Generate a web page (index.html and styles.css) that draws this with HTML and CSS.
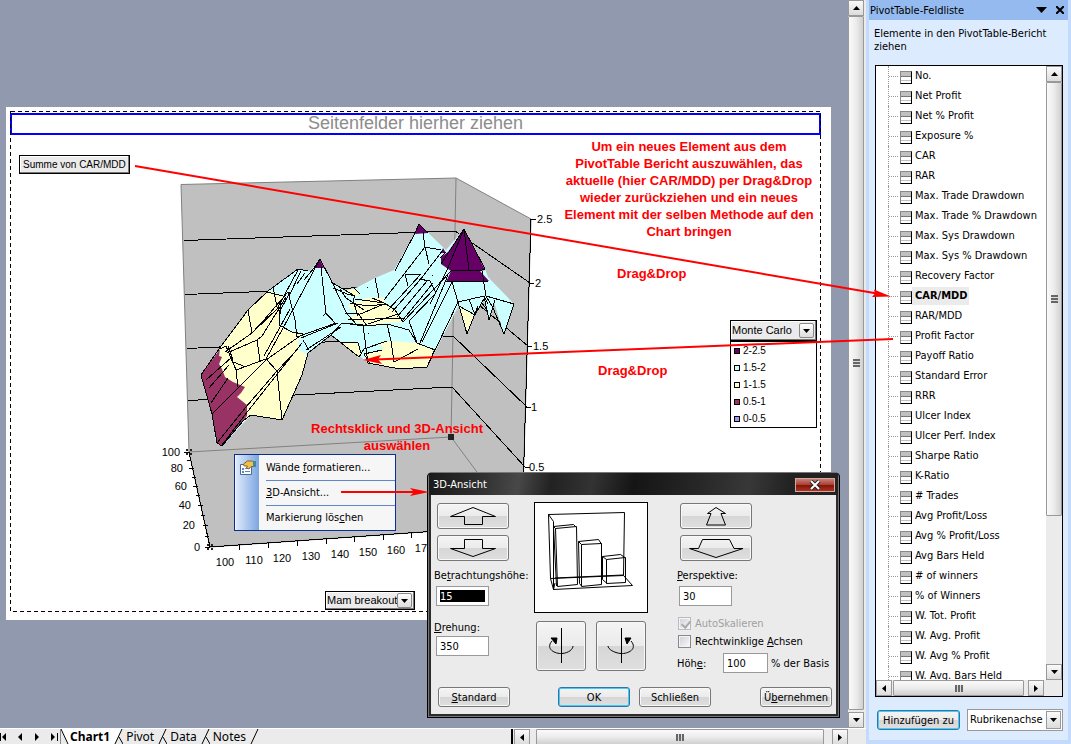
FILE: index.html
```html
<!DOCTYPE html>
<html lang="de">

<head>
    <meta charset="UTF-8">
    <meta name="viewport" content="width=device-width, initial-scale=1.0">
    <title>PivotChart</title>
    <link rel="stylesheet" href="styles.css">
</head>

<body>
    <main class="workspace">
        <div class="work-row">
            <div class="stage">
                <section class="sheet">
                    <div class="page-fields">Seitenfelder hierher ziehen</div>

                    <svg class="chart" viewBox="6 107 825 513" width="825" height="513">
                        <!-- print area -->
                        <path class="dashed" d="M10.5 111.5H820.5V611.5H10.5Z" />

                        <!-- walls and floor -->
                        <path fill="#c0c0c0" stroke="#808080" d="M181 184.500L456 178L531 219L522 525L210 547L189 452Z" />
                        <path class="wall" d="M456 178L451 437M189 452L451 437L517 526" />
                        <path class="line" d="M184 240.500L455 231L530 283M185 294.500L454 284L528 346M187 348.500L453 336L527 407M188 400.500L452 387L525 467" />
                        <path class="line" d="M531 219L522 525M189 452L210 547L522 525" />
                        <path class="line" d="M531 219h5M529 283h5M527 346h5M526 407h5M525 467h5" />
                        <path class="line" d="M184 452h5M187 460h4M189 468h5M192 477h4M193 486h5M196 495h4M198 505h5M201 515h4M203 525h5M205 536h4M205 547h5" />
                        <path class="line" d="M239 545v5M268 543v5M297 541v5M326 539v5M354 537v5M383 535v5M411 533v5" />

                        <!-- surface bands -->
                        <path fill="#ccffff" class="edge" d="M219 349L248 310L268 291L298 269L310 271L320 259L332 282L345 291L358 287L375 278L394 270L415 233L419 224L446 250L464 229L485 269L488 277L514 304L504 334L494 302L489 321L484 300L482 304L474 315L467 334L459 305L427 367L400 369L370 364L331 335L308 353L302 375L282 420L251 415L222 446L216 443L212 414L201 375Z" />
                        <path fill="#ffffcc" d="M219 349L248 310L268 291L283 296L280 313L279 325L292 332L303 334L298 340L299 350L307 355L302 375L282 420L251 415L245 421L222 380Z" />
                        <path fill="#ffffcc" d="M345 290L357 289L360 295L353 297ZM348 307L350 303L362 301L365 298L383 297L386 304L395 310L403 322L385 323L367 326L348 319L358 313ZM340 342L357 343L361 353L359 358ZM363 354L383 350L380 344L390 341L417 343L434 350L427 367L400 369L370 363ZM459 307L474 315L467 334Z" />
                        <path fill="#993366" d="M220 349L219 356L222 357L219 364L222 369L225 377L233 382L245 387L241 393L237 397L247 405L247 416L222 446L217 443L212 414L201 375Z" />
                        <path fill="#660066" d="M320 260L324 268H314ZM419 224L428 233L415 234ZM443 248L446 253H441ZM464 229L485 270L480 271L489 281L446 282L451 271L441 264L441 257L448 252Z" />

                        <!-- surface mesh -->
                        <g class="mesh">
                            <path d="M201 375L219 349L248 310L268 291L298 269L308 271M201 375L212 414L217 443L222 446L243 421L251 415L282 420L302 375L308 353L331 335" />
                            <path d="M248 310L252 333L225 352M252 333L279 307M220 349L226 346L236 370L238 387M227 353L257 340L260 361M257 340L262 336M228 346L233 360" />
                            <path d="M236 370L266 359L277 371L282 420M233 362L246 367M262 336L280 307L286 297M206 380L232 357M209 388L229 365" />
                            <path d="M212 414L266 360L300 336M217 443L246 407L277 371L298 349M222 445L248 411L302 343M211 403L228 378" />
                            <path d="M267 292L283 296M273 287L277 307L281 314M298 270L278 307M301 271L289 296M305 273L297 284M288 292L264 320L252 333M288 292L295 320L297 337M290 292L279 313" />
                            <path d="M320 259L288 319L266 359M321 267L326 314L335 323M320 259L332 282L347 314L358 326M323 316L326 313L335 323M279 325L292 332L303 334M281 300L279 325M314 268L304 280M297 337L336 323M303 340L309 350M264 356L290 309" />
                            <path d="M301 338L338 323M306 350L341 327M331 335L342 323L363 325" />
                            <path d="M331 282L355 296L353 300L358 316M333 288L347 294L355 296M340 289L346 298L364 310M355 299L384 303M353 287L360 294M345 314L358 313L367 326M348 320L403 318M350 303L368 306L387 304M358 315L384 304M368 324L398 314M372 298L382 302L386 304L395 310L403 322" />
                            <path d="M331 335L359 357L364 349L387 341M340 342L358 343L361 353M363 325L368 363L400 369L427 367L435 349M342 323L365 326L387 324L409 330L417 343M387 324L391 341L394 362L418 349M417 343L435 350M370 364L364 354L382 350" />
                            <path d="M375 278L379 298M395 271L415 233M423 232L425 247L384 300M425 247L429 264M405 274L421 274L388 310M405 274L408 286M425 247L441 250M443 250L420 280L392 312M419 279L430 281L436 293M427 281L397 317M433 283L402 321M436 293L409 321L417 343M451 271L403 322M448 275L420 343" />
                            <path d="M464 229L447 270L430 304M464 229L469 270L482 270L485 269M451 271L469 270M446 282L489 281M452 282L458 302L427 367M482 271L486 296L514 304M452 282L422 342M458 302L484 296L488 304M458 302L467 334L478 306M459 306L475 315M469 299L475 315L485 297M484 296L489 320L495 300M504 334L514 304M482 303L487 310M486 296L493 308L504 334" />
                            <path d="M464 229L441 264M464 229L485 269M419 224L415 233M419 224L428 233M320 259L314 268M440 258L446 252M367 287h1M432 275h1M368 333h1" />
                        </g>
                        <!-- selection handles -->
                        <g class="handle">
                            <path d="M186 449h2v2h-2zM190 449h2v2h-2zM186 453h2v2h-2zM190 453h2v2h-2zM207 544h2v2h-2zM211 544h2v2h-2zM207 548h2v2h-2zM211 548h2v2h-2zM448 434h6v6h-6z" />
                        </g>

                        <g class="axis axis-left">
                            <text x="180" y="456">100</text>
                            <text x="183" y="472">80</text>
                            <text x="187" y="490">60</text>
                            <text x="191" y="509">40</text>
                            <text x="195" y="529">20</text>
                            <text x="200" y="551">0</text>
                        </g>
                        <g class="axis axis-bottom">
                            <text x="225" y="566">100</text>
                            <text x="254" y="564">110</text>
                            <text x="282" y="562">120</text>
                            <text x="311" y="560">130</text>
                            <text x="340" y="558">140</text>
                            <text x="368" y="556">150</text>
                            <text x="396" y="554">160</text>
                            <text x="424" y="552">170</text>
                        </g>
                        <g class="axis">
                            <text x="537" y="223">2.5</text>
                            <text x="535" y="287">2</text>
                            <text x="533" y="350">1.5</text>
                            <text x="531" y="411">1</text>
                            <text x="529" y="471">0.5</text>
                        </g>
                    </svg>

                    <button class="field-button data-field">Summe von CAR/MDD</button>
                    <button class="field-button category-field">Mam breakout
                        <span class="drop"><svg width="7" height="4"><path d="M0 0h7L3.500 4z" /></svg></span>
                    </button>

                    <div class="legend">
                        <button class="field-button legend-field">Monte Carlo
                            <span class="drop"><svg width="7" height="4"><path d="M0 0h7L3.500 4z" /></svg></span>
                        </button>
                        <ul class="legend-items">
                            <li><i class="key key-5"></i>2-2.5</li>
                            <li><i class="key key-4"></i>1.5-2</li>
                            <li><i class="key key-3"></i>1-1.5</li>
                            <li><i class="key key-2"></i>0.5-1</li>
                            <li><i class="key key-1"></i>0-0.5</li>
                        </ul>
                    </div>

                    <p class="note note-main">Um ein neues Element aus dem<br>PivotTable Bericht auszuwählen, das<br>aktuelle (hier CAR/MDD) per Drag&amp;Drop<br>wieder zurückziehen und ein neues<br>Element mit der selben Methode auf den<br>Chart bringen</p>
                    <p class="note note-drag-1">Drag&amp;Drop</p>
                    <p class="note note-drag-2">Drag&amp;Drop</p>
                    <p class="note note-menu">Rechtsklick und 3D-Ansicht<br>auswählen</p>
                </section>
            </div>

            <div class="scrollbar vertical stage-scroll">
                <button class="scroll-button" aria-label="Nach oben"><svg width="7" height="4"><path d="M0 4h7L3.500 0z" /></svg></button>
                <div class="thumb"><i class="grip"></i></div>
                <button class="scroll-button" aria-label="Nach unten"><svg width="7" height="4"><path d="M0 0h7L3.500 4z" /></svg></button>
            </div>
        </div>

        <footer class="tab-bar">
            <div class="tab-nav">
                <button aria-label="Erstes Blatt"><svg width="7" height="8"><path d="M0 0h1v8H0zM6 0v8L2 4z" /></svg></button>
                <button aria-label="Vorheriges Blatt"><svg width="7" height="8"><path d="M5 0v8L1 4z" /></svg></button>
                <button aria-label="Nächstes Blatt"><svg width="7" height="8"><path d="M1 0v8l4-4z" /></svg></button>
                <button aria-label="Letztes Blatt"><svg width="7" height="8"><path d="M0 0v8l4-4zM6 0h1v8H6z" /></svg></button>
            </div>
            <div class="tabs">
                <svg class="slash" width="9" height="16"><path class="slash-fill" d="M0 0h9v16H7z" /><path d="M0 0L7 15" /></svg>
                <button class="tab active">Chart1</button>
                <svg class="slash" width="9" height="16"><path class="slash-fill" d="M0 0h8L0 16z" /><path d="M8 0L1 15M5 8l4 7" /></svg>
                <button class="tab">Pivot</button>
                <svg class="slash" width="9" height="16"><path d="M8 0L1 15M5 8l4 7" /></svg>
                <button class="tab">Data</button>
                <svg class="slash" width="9" height="16"><path d="M8 0L1 15M5 8l4 7" /></svg>
                <button class="tab">Notes</button>
                <svg class="slash" width="9" height="16"><path d="M8 0L1 15" /></svg>
            </div>
            <div class="scrollbar horizontal sheet-scroll">
                <button class="scroll-button" aria-label="Nach links"><svg width="4" height="7"><path d="M4 0v7L0 3.500z" /></svg></button>
                <div class="thumb"><i class="grip"></i></div>
                <button class="scroll-button" aria-label="Nach rechts"><svg width="4" height="7"><path d="M0 0v7l4-3.500z" /></svg></button>
            </div>
        </footer>
    </main>

    <aside class="pane">
        <header class="pane-title">
            <h2>PivotTable-Feldliste</h2>
            <button aria-label="Optionen"><svg width="11" height="6"><path d="M0 0h11L5.500 6z" /></svg></button>
            <button aria-label="Schließen"><svg width="8" height="8"><path fill="none" stroke="#000" stroke-width="2" d="M0 0l8 8M8 0L0 8" /></svg></button>
        </header>
        <div class="pane-body">
            <p class="pane-hint">Elemente in den PivotTable-Bericht ziehen</p>
            <div class="field-box">
                <div class="field-row">
                    <ul class="fields">
                        <li><i class="field-icon"></i><span>No.</span></li>
                        <li><i class="field-icon"></i><span>Net Profit</span></li>
                        <li><i class="field-icon"></i><span>Net % Profit</span></li>
                        <li><i class="field-icon"></i><span>Exposure %</span></li>
                        <li><i class="field-icon"></i><span>CAR</span></li>
                        <li><i class="field-icon"></i><span>RAR</span></li>
                        <li><i class="field-icon"></i><span>Max. Trade Drawdown</span></li>
                        <li><i class="field-icon"></i><span>Max. Trade % Drawdown</span></li>
                        <li><i class="field-icon"></i><span>Max. Sys Drawdown</span></li>
                        <li><i class="field-icon"></i><span>Max. Sys % Drawdown</span></li>
                        <li><i class="field-icon"></i><span>Recovery Factor</span></li>
                        <li class="used"><i class="field-icon"></i><span>CAR/MDD</span></li>
                        <li><i class="field-icon"></i><span>RAR/MDD</span></li>
                        <li><i class="field-icon"></i><span>Profit Factor</span></li>
                        <li><i class="field-icon"></i><span>Payoff Ratio</span></li>
                        <li><i class="field-icon"></i><span>Standard Error</span></li>
                        <li><i class="field-icon"></i><span>RRR</span></li>
                        <li><i class="field-icon"></i><span>Ulcer Index</span></li>
                        <li><i class="field-icon"></i><span>Ulcer Perf. Index</span></li>
                        <li><i class="field-icon"></i><span>Sharpe Ratio</span></li>
                        <li><i class="field-icon"></i><span>K-Ratio</span></li>
                        <li><i class="field-icon"></i><span># Trades</span></li>
                        <li><i class="field-icon"></i><span>Avg Profit/Loss</span></li>
                        <li><i class="field-icon"></i><span>Avg % Profit/Loss</span></li>
                        <li><i class="field-icon"></i><span>Avg Bars Held</span></li>
                        <li><i class="field-icon"></i><span># of winners</span></li>
                        <li><i class="field-icon"></i><span>% of Winners</span></li>
                        <li><i class="field-icon"></i><span>W. Tot. Profit</span></li>
                        <li><i class="field-icon"></i><span>W. Avg. Profit</span></li>
                        <li><i class="field-icon"></i><span>W. Avg % Profit</span></li>
                        <li><i class="field-icon"></i><span>W. Avg. Bars Held</span></li>
                    </ul>
                    <div class="scrollbar vertical list-scroll">
                        <button class="scroll-button" aria-label="Nach oben"><svg width="7" height="4"><path d="M0 4h7L3.500 0z" /></svg></button>
                        <div class="thumb"><i class="grip"></i></div>
                        <button class="scroll-button" aria-label="Nach unten"><svg width="7" height="4"><path d="M0 0h7L3.500 4z" /></svg></button>
                    </div>
                </div>
                <div class="scrollbar horizontal list-hscroll">
                    <button class="scroll-button" aria-label="Nach links"><svg width="4" height="7"><path d="M4 0v7L0 3.500z" /></svg></button>
                    <div class="thumb"><i class="grip"></i></div>
                    <button class="scroll-button" aria-label="Nach rechts"><svg width="4" height="7"><path d="M0 0v7l4-3.500z" /></svg></button>
                </div>
            </div>
            <div class="pane-actions">
                <button class="button default add">Hinzufügen zu</button>
                <div class="select-wrap">
                    <select aria-label="Bereich">
                        <option>Rubrikenachse</option>
                    </select>
                    <span class="select-arrow"><svg width="7" height="4"><path d="M0 0h7L3.500 4z" /></svg></span>
                </div>
            </div>
        </div>
    </aside>

    <div class="context-menu" role="menu">
        <button role="menuitem">
            <svg class="menu-icon" width="18" height="16">
                <path fill="#fff" stroke="#4a6a9a" d="M1.500 4.500h11v10h-11z" />
                <path fill="#5a86c8" d="M3 8h2v2H3zM3 11h2v2H3zM6 8h5v1H6zM6 11h5v1H6z" />
                <path fill="#f0c050" stroke="#8a6420" d="M4.500 4l4-3h5l2 2v3l-4 1-2 2-2-1 1-2H5z" />
                <path fill="#3c8a9a" d="M14 1h3v6h-3z" />
            </svg>
            <span>Wände <u>f</u>ormatieren...</span>
        </button>
        <button role="menuitem"><span><u>3</u>D-Ansicht...</span></button>
        <button role="menuitem"><span>Markierung lös<u>c</u>hen</span></button>
    </div>

    <form class="dialog" role="dialog" aria-label="3D-Ansicht">
        <div class="dialog-title">
            <span>3D-Ansicht</span>
            <button type="button" class="dialog-close" aria-label="Schließen"><svg width="12" height="10"><path d="M2 1l8 8M10 1L2 9" stroke="#222" stroke-width="4" /><path d="M2 1l8 8M10 1L2 9" stroke="#fff" stroke-width="2" /></svg></button>
        </div>
        <div class="dialog-body">
            <div class="columns">
                <div class="column">
                    <button type="button" class="button arrow" aria-label="Höher"><svg width="48" height="20"><path d="M1.500 10.500L24 1.500l22.500 9h-13v8h-18v-8z" /></svg></button>
                    <button type="button" class="button arrow" aria-label="Tiefer"><svg width="48" height="20"><path d="M1.500 10.500L24 18.500l22.500-8h-13v-9h-18v9z" /></svg></button>
                    <label for="elevation">Be<u>t</u>rachtungshöhe:</label>
                    <input type="text" id="elevation" class="selected" value="15">
                    <label for="rotation" class="rotation-label"><u>D</u>rehung:</label>
                    <input type="text" id="rotation" value="350">
                </div>
                <div class="column preview-column">
                    <svg class="preview" viewBox="0 0 112 109">
                        <path d="M13.500 11.500L89.500 9.500L88.500 72.500L15.500 75.500ZM13.500 11.500L18.500 18.500V86.500L97.500 82.500L88.500 72.500M15.500 75.500L18.500 86.500L20 80" />
                        <path d="M20.500 25.500L41.500 23.500L42.500 81.500L22.500 83.500ZM20.500 25.500L18.500 23.500L38.500 21.500L41.500 24.500M18.500 23.500L21.500 83M46.500 41.500L66.500 40.500V81.500L46.500 83.500ZM46.500 41.500L43.500 38.500L63.500 36.500L66.500 41M43.500 38.500L44.500 80.500L46.500 83M71.500 56.500L90.500 54.500V79.500L71.500 80.500ZM71.500 56.500L67.500 53.500L85.500 51.500L90.500 55M67.500 53.500V76.500L71.500 80M20 75L88 72" />
                    </svg>
                    <div class="turn-buttons">
                        <button type="button" class="button turn" aria-label="Links drehen"><svg width="30" height="36"><path d="M15.500 0v35M6 13C-1 21 9 26 16 25.500C23 25 27 21 27 18" /><path class="solid" d="M5 10h6l-1 6z" /></svg></button>
                        <button type="button" class="button turn" aria-label="Rechts drehen"><svg width="30" height="36"><path d="M15.500 0v35M25 13C32 21 22 26 15 25.500C8 25 2 21 2 18" /><path class="solid" d="M19 10h6l-4 6z" /></svg></button>
                    </div>
                </div>
                <div class="column right-column">
                    <button type="button" class="button arrow" aria-label="Perspektive vergrößern"><svg width="56" height="20"><path d="M28 1.500L19.500 7.500H23L18.500 19H37.500L33 7.500H37.500Z" /></svg></button>
                    <button type="button" class="button arrow" aria-label="Perspektive verkleinern"><svg width="56" height="20"><path d="M14.500 1.500h27l4.500 9h9L28 19.500L1.500 10.500h9z" /></svg></button>
                    <label for="perspective"><u>P</u>erspektive:</label>
                    <input type="text" id="perspective" value="30">
                    <label class="check disabled"><input type="checkbox" checked disabled>AutoSkalieren</label>
                    <label class="check"><input type="checkbox"><span>Rechtwinklige <u>A</u>chsen</span></label>
                    <div class="height-row">
                        <label for="height">Höh<u>e</u>:</label>
                        <input type="text" id="height" value="100">
                        <span>% der Basis</span>
                    </div>
                </div>
            </div>
            <div class="dialog-actions">
                <button type="button" class="button"><span><u>S</u>tandard</span></button>
                <button type="submit" class="button default ok">OK</button>
                <button type="button" class="button">Schließen</button>
                <button type="button" class="button apply"><span>Ü<u>b</u>ernehmen</span></button>
            </div>
        </div>
    </form>

    <!-- drag & drop arrows -->
    <svg class="arrows" width="900" height="500">
        <path d="M135 166L880 294M893 339L375 359.500M341 492H418" />
        <path class="head" d="M891 296.500L872 297L875 293.500L874 289.500ZM363 360L381 355L378 359.500L382 364ZM429 492L410 488L414 492L410 496Z" />
    </svg>
</body>

</html>
```

FILE: styles.css
```css
* {
    box-sizing: border-box;
}

body {
    margin: 0;
    height: 100vh;
    display: flex;
    overflow: hidden;
    position: relative;
    background-color: #ebebeb;
    font-family: "DejaVu Sans Condensed", "Noto Sans", sans-serif;
    font-size: 11px;
    line-height: 13px;
    color: #000;
}

button,
input,
select {
    font: inherit;
    color: inherit;
    margin: 0;
    padding: 0;
}

button {
    border: none;
    background: none;
    white-space: nowrap;
}

ul {
    list-style: none;
    margin: 0;
    padding: 0;
}

p,
h2 {
    margin: 0;
}

svg {
    display: block;
}

/* workspace */
.workspace {
    flex: 1;
    min-width: 0;
    display: flex;
    flex-direction: column;
}

.work-row {
    flex: 1;
    min-height: 0;
    display: flex;
}

.stage {
    flex: 1;
    min-width: 0;
    padding: 107px 17px 0 6px;
    background-color: #9199ae;
    overflow: hidden;
}

.sheet {
    position: relative;
    background-color: #fff;
    padding: 6px 10px 0 4px;
    height: 513px;
}

.page-fields {
    border: 2px solid #0000ff;
    height: 22px;
    font-family: "Liberation Sans", Arial, sans-serif;
    font-size: 18px;
    line-height: 17px;
    text-align: center;
    color: #8c8c8c;
}

.chart {
    position: absolute;
    top: 0;
    left: 0;
    fill: none;
}

.dashed {
    stroke: #000;
    stroke-dasharray: 4 3;
    shape-rendering: crispEdges;
}

.line {
    stroke: #000;
    shape-rendering: crispEdges;
}

.wall {
    stroke: #808080;
}

.mesh {
    stroke: #000;
    shape-rendering: crispEdges;
}

.handle {
    fill: #222;
}

.axis {
    font-family: "Liberation Sans", Arial, sans-serif;
    font-size: 11px;
    fill: #000;
}

.axis-left {
    text-anchor: end;
}

.axis-bottom {
    text-anchor: middle;
}

.field-button {
    display: flex;
    align-items: center;
    justify-content: space-between;
    border: 1px solid #000;
    background-color: #ebebeb;
    box-shadow: inset -1px -1px 0 #777, inset 1px 1px 0 #fff;
    padding: 0 2px 0 1px;
    height: 19px;
    font-family: "Liberation Sans", Arial, sans-serif;
}

.data-field {
    position: absolute;
    top: 48px;
    left: 13px;
    padding: 0 3px;
    font-size: 10px;
}

.category-field {
    position: absolute;
    top: 484px;
    left: 319px;
    width: 90px;
}

.drop {
    display: flex;
    align-items: center;
    justify-content: center;
    width: 15px;
    height: 15px;
    border: 1px solid #888;
    border-radius: 2px;
    background: linear-gradient(#fff, #ddd);
}

.legend {
    position: absolute;
    top: 213px;
    left: 724px;
    width: 87px;
    border: 1px solid #000;
    background-color: #fff;
    font-family: "Liberation Sans", Arial, sans-serif;
}

.legend-field {
    width: 100%;
    height: 21px;
    border-width: 0 0 2px;
}

.legend-items {
    padding-left: 3px;
    font-size: 10px;
    line-height: 17px;
}

.legend-items li {
    display: flex;
    align-items: center;
    gap: 3px;
}

.key {
    width: 6px;
    height: 6px;
    border: 1px solid #000;
}

.key-1 {
    background-color: #9999ff;
}

.key-2 {
    background-color: #993366;
}

.key-3 {
    background-color: #ffffcc;
}

.key-4 {
    background-color: #ccffff;
}

.key-5 {
    background-color: #660066;
}

/* red annotations */
.note {
    position: absolute;
    font-family: "Liberation Sans", Arial, sans-serif;
    font-size: 13px;
    font-weight: bold;
    line-height: 17px;
    text-align: center;
    white-space: nowrap;
    color: #f00;
}

.note-main {
    top: 31px;
    left: 548px;
    width: 270px;
}

.note-drag-1 {
    top: 158px;
    left: 611px;
}

.note-drag-2 {
    top: 255px;
    left: 592px;
}

.note-menu {
    top: 313px;
    left: 301px;
    width: 180px;
}

.arrows {
    position: absolute;
    top: 0;
    left: 0;
    pointer-events: none;
    fill: none;
    stroke: #f00;
    stroke-width: 2;
}

.arrows .head {
    fill: #f00;
    stroke: none;
}

/* scrollbars */
.scrollbar {
    display: flex;
    background-color: #ebebeb;
}

.scroll-button {
    flex: none;
    display: flex;
    align-items: center;
    justify-content: center;
    width: 16px;
    height: 16px;
    border: 1px solid #999;
    background: linear-gradient(#fafafa, #dcdcdc);
}

.thumb {
    flex: 1;
    display: flex;
    align-items: center;
    justify-content: center;
    border: 1px solid #999;
    border-radius: 1px;
}

.vertical {
    flex-direction: column;
}

.stage-scroll {
    width: 18px;
    padding-right: 2px;
}

.vertical .thumb {
    margin: 0 0 2px;
    background: linear-gradient(to right, #fafafa, #ececec 50%, #d0d0d0);
}

.horizontal {
    height: 16px;
}

.horizontal .thumb {
    margin: 0 1px;
    background: linear-gradient(#fafafa, #ececec 50%, #d0d0d0);
}

.grip {
    width: 8px;
    height: 7px;
    background: repeating-linear-gradient(to right, #666 0 2px, #ddd 2px 3px);
}

.vertical .grip {
    width: 7px;
    height: 8px;
    background: repeating-linear-gradient(#666 0 2px, #ddd 2px 3px);
}

/* sheet tabs */
.tab-bar {
    display: flex;
    height: 16px;
    padding-right: 18px;
    border-top: 1px solid #fff;
}

.tab-nav {
    display: flex;
    align-items: center;
    gap: 10px;
    width: 61px;
    border-right: 1px solid #888;
}

.tabs {
    flex: 1;
    display: flex;
    border-right: 2px solid #000;
    margin-right: 1px;
}

.tab {
    font-family: "Noto Sans", sans-serif;
    font-size: 12px;
    line-height: 14px;
    padding: 0 4px 0 3px;
}

.tab.active {
    background-color: #fff;
    padding: 0 4px 0 0;
    font-weight: bold;
}

.slash {
    flex: none;
    fill: none;
    stroke: #000;
}

.slash .slash-fill {
    fill: #fff;
    stroke: none;
}

.sheet-scroll {
    width: 334px;
}

.sheet-scroll .thumb {
    margin: 0 8px 0 6px;
}

/* field list pane */
.pane {
    flex: none;
    width: 205px;
    display: flex;
    flex-direction: column;
    padding: 0 3px 4px;
    background-color: #c2dafc;
}

.pane-title {
    display: flex;
    align-items: center;
    gap: 9px;
    height: 20px;
    padding: 0 4px 0 1px;
    background-color: #94baef;
}

.pane-title h2 {
    flex: 1;
    font-size: 11px;
    font-weight: normal;
}

.pane-body {
    flex: 1;
    min-height: 0;
    display: flex;
    flex-direction: column;
    padding: 7px 5px 9px 6px;
    background-color: #ddebfe;
}

.pane-hint {
    height: 38px;
    padding-right: 12px;
    margin-left: -1px;
}

.field-box {
    flex: 1;
    min-height: 0;
    display: flex;
    flex-direction: column;
    border: 1px solid #000;
    background-color: #fff;
}

.field-row {
    flex: 1;
    min-height: 0;
    display: flex;
}

.fields {
    flex: 1;
    overflow: hidden;
    padding-left: 12px;
}

.fields li {
    display: flex;
    align-items: center;
    height: 20px;
    padding-left: 11px;
    border-left: 1px dotted #999;
    background: repeating-linear-gradient(to right, #999 0 1px, #fff 1px 2px) no-repeat 0 10px / 9px 1px;
    white-space: nowrap;
}

.fields span {
    padding: 2px 2px 3px 3px;
}

.field-icon {
    flex: none;
    width: 12px;
    height: 13px;
    margin-top: 2px;
    border: 1px solid #000;
    border-top-color: #888;
    border-left-color: #888;
    background: linear-gradient(#c0c0c0 0 4px, #777 4px 5px, #fff 5px 8px, #c0c0c0 8px 9px, #fff 9px);
}

.used span {
    font-weight: bold;
    background-color: #ebebeb;
}

.list-scroll {
    width: 16px;
}

.list-scroll .thumb {
    flex: none;
    height: 434px;
    margin-bottom: auto;
}

.list-hscroll .thumb {
    flex: none;
    width: 131px;
    margin-right: 4px;
}

.pane-actions {
    display: flex;
    gap: 7px;
    padding: 12px 0 0 2px;
}

.select-wrap {
    position: relative;
    flex: 1;
}

select {
    appearance: none;
    width: 100%;
    height: 22px;
    padding: 0 17px 2px 2px;
    border: 1px solid #999;
    border-radius: 0;
    background-color: #fff;
}

.select-arrow {
    position: absolute;
    top: 2px;
    right: 2px;
    display: flex;
    align-items: center;
    justify-content: center;
    width: 15px;
    height: 18px;
    border: 1px solid #999;
    background: linear-gradient(#fafafa, #dcdcdc);
    pointer-events: none;
}

/* buttons */
.button {
    display: flex;
    align-items: center;
    justify-content: center;
    width: 72px;
    height: 20px;
    border: 1px solid #777;
    border-radius: 3px;
    background: linear-gradient(#f4f4f4, #ebebeb 50%, #d6d6d6 50%, #dfdfdf);
    box-shadow: inset 0 0 0 1px #f8f8f8;
}

.button svg {
    fill: none;
    stroke: #000;
}

.button .solid {
    fill: #000;
}

.button.default {
    border-color: #2c77a8;
    box-shadow: inset 0 0 0 1px #48c8f4;
}

.button.add {
    width: 83px;
    margin-top: 1px;
}

/* context menu */
.context-menu {
    position: absolute;
    top: 454px;
    left: 234px;
    width: 162px;
    border: 1px solid #0a2f94;
    background: linear-gradient(to right, #f6f6f6 1px, #dceafc 1px, #7da5e0 24px, #f6f6f6 24px);
}

.context-menu button {
    display: flex;
    align-items: center;
    width: 100%;
    height: 25px;
    padding-left: 31px;
    text-align: left;
}

.context-menu button + button {
    background: linear-gradient(#5f88cc, #5f88cc) no-repeat 31px 0 / 100% 1px;
}

.context-menu .menu-icon {
    margin: 0 9px 0 -27px;
}

/* 3D view dialog */
.dialog {
    position: absolute;
    top: 472px;
    left: 427px;
    width: 413px;
    padding: 0 3px 3px;
    border-radius: 5px 5px 0 0;
    background-color: #2c2c2c;
    border: 1px solid #000;
    border-top-color: #777;
    box-shadow: inset 0 0 0 1px #777;
}

.dialog-title {
    display: flex;
    align-items: center;
    justify-content: space-between;
    height: 22px;
    margin: 0 -2px;
    padding: 1px 3px 0 4px;
    background: linear-gradient(100deg, #1a1a1a 0, #2e2e2e 12%, #484848 22%, #222 30%, #333 40%, #151515 50%, #262626 65%, #383838 78%, #222 88%);
    color: #fff;
}

.dialog-close {
    display: flex;
    align-items: center;
    justify-content: center;
    width: 40px;
    height: 14px;
    border: 1px solid #d0a8a0;
    background: linear-gradient(#c88078, #a83c30 50%, #801408 50%, #b03020);
}

.dialog-body {
    padding: 8px 4px 7px 3px;
    background-color: #ebebeb;
}

.columns {
    display: flex;
    height: 181px;
}

.column {
    display: flex;
    flex-direction: column;
    align-items: flex-start;
    width: 100px;
}

.column label {
    white-space: nowrap;
}

.arrow {
    height: 26px;
    margin: 0 0 6px 3px;
}

.column label[for] {
    margin: 2px 0 4px;
}

.column .rotation-label[for] {
    margin: 15px 0 2px;
}

.column input[type="text"] {
    width: 53px;
    height: 20px;
    margin-left: 2px;
    padding: 0 3px;
    border: 1px solid #999;
    background-color: #fff;
}

.column .selected[type="text"] {
    background: linear-gradient(#000, #000) no-repeat 3px 3px / 45px 12px #fff;
    color: #fff;
}

.preview-column {
    width: 114px;
}

.preview {
    width: 114px;
    height: 111px;
    border: 1px solid #000;
    background-color: #fff;
    fill: none;
    stroke: #000;
    margin-top: -1px;
}

.turn-buttons {
    display: flex;
    gap: 10px;
    padding: 8px 2px;
}

.turn {
    width: 50px;
    height: 50px;
}

.right-column {
    width: auto;
    margin-left: 29px;
}

.check {
    display: flex;
    align-items: center;
    gap: 4px;
    margin: 11px 0 0 1px;
    height: 13px;
}

.check + .check {
    margin-top: 5px;
}

.check input {
    appearance: none;
    width: 13px;
    height: 13px;
    border: 1px solid #888;
    background: linear-gradient(135deg, #ccd0d8, #fafafa);
    box-shadow: inset 0 0 0 1px #f4f4f4;
}

.check input:checked::after {
    content: "";
    display: block;
    width: 4px;
    height: 7px;
    margin: 1px 0 0 4px;
    border: solid #aaa;
    border-width: 0 2px 2px 0;
    transform: rotate(40deg);
}

.check.disabled {
    color: #a0a0a0;
}

.check.disabled input {
    border-color: #bbb;
}

.height-row {
    display: flex;
    align-items: center;
    margin-top: 5px;
    white-space: nowrap;
}

.height-row label[for] {
    width: 44px;
    margin: 0;
}

.column .height-row input {
    width: 45px;
    margin-right: 3px;
}

.dialog-actions {
    display: flex;
    gap: 9px;
    padding: 3px 0 0 4px;
}

.ok {
    margin-left: 39px;
}

.apply {
    margin-left: auto;
}
```
